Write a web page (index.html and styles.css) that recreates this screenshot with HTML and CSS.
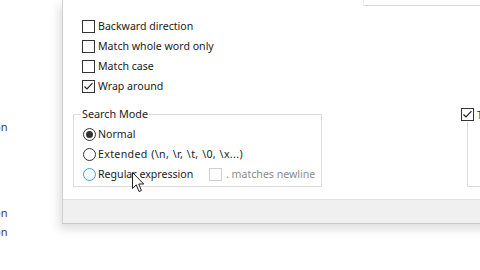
FILE: index.html
```html
<!DOCTYPE html>
<html>
<head>
<meta charset="utf-8">
<link rel="stylesheet" href="styles.css">
</head>
<body>
<div class="page">
  <div class="margin-col">
    <span class="frag f1">on</span>
    <span class="frag f2">on</span>
    <span class="frag f3">on</span>
  </div>
  <div class="dialog">
    <div class="content">
      <div class="combo"></div>
      <div class="options">
        <div class="row"><span class="cb"></span><span class="lbl">Backward direction</span></div>
        <div class="row"><span class="cb"></span><span class="lbl">Match whole word only</span></div>
        <div class="row"><span class="cb"></span><span class="lbl">Match case</span></div>
        <div class="row"><span class="cb"><svg width="11" height="11" viewBox="0 0 11 11"><path d="M1.5 5.5 L4 8 L9.5 2.2" fill="none" stroke="#222" stroke-width="1.2"/></svg></span><span class="lbl">Wrap around</span></div>
      </div>
      <div class="groups">
        <fieldset class="mode">
          <legend>Search Mode</legend>
          <div class="radios">
            <div class="row"><span class="rb on"><span class="dot"></span></span><span class="lbl">Normal</span></div>
            <div class="row"><span class="rb"></span><span class="lbl ext">Extended (\n, \r, \t, \0, \x...)</span></div>
            <div class="row"><span class="rb hover"></span><span class="lbl re">Regular expression</span><span class="cb dis"></span><span class="lbl dim">. matches newline</span></div>
          </div>
        </fieldset>
        <div class="trans">
          <div class="row"><span class="cb"><svg width="11" height="11" viewBox="0 0 11 11"><path d="M1.5 5.5 L4 8 L9.5 2.2" fill="none" stroke="#222" stroke-width="1.2"/></svg></span><span class="lbl">Transparency</span></div>
          <div class="tbox"></div>
        </div>
      </div>
    </div>
    <div class="status"></div>
  </div>
</div>
<svg class="cursor" width="14" height="22" viewBox="0 0 14 22"><path d="M0.5 0.5 L0.5 16.5 L4.3 12.8 L7 19.5 L9.4 18.5 L6.7 12 L11.8 12 Z" fill="#fff" stroke="#222" stroke-width="1"/></svg>
</body>
</html>
```

FILE: styles.css
```css
html, body {
  margin: 0;
  padding: 0;
  background: #fff;
}
body {
  width: 480px;
  height: 270px;
  overflow: hidden;
  position: relative;
  font-family: "Noto Sans", "Open Sans", sans-serif;
  font-size: 10.6px;
  color: #1b1b1b;
}
.page {
  display: flex;
  height: 270px;
  overflow: hidden;
}
.margin-col {
  width: 62px;
  flex: none;
  display: flex;
  flex-direction: column;
  overflow: hidden;
  opacity: 0.99;
}
.frag {
  display: block;
  margin-left: -6px;
  line-height: 14px;
  color: #3a3a3a;
  font-size: 11px;
}
.f1 { margin-top: 120px; }
.f2 { margin-top: 72px; }
.f3 { margin-top: 5px; }
.dialog {
  width: 430px;
  flex: none;
  height: 224px;
  border-left: 1px solid #cfcfcf;
  background: #fff;
  display: flex;
  flex-direction: column;
  box-shadow: -3px 5px 9px rgba(0, 0, 0, 0.13);
}
.content {
  flex: 1;
  display: flex;
  flex-direction: column;
}
.combo {
  height: 5px;
  margin-left: 300px;
  border-bottom: 1px solid #dcdcdc;
  border-left: 1px solid #ececec;
}
.options {
  margin-top: 10px;
  padding-left: 19px;
}
.row {
  height: 20px;
  display: flex;
  align-items: center;
  white-space: nowrap;
}
.cb {
  width: 13px;
  height: 13px;
  box-sizing: border-box;
  border: 1px solid #333;
  background: #fff;
  flex: none;
  display: flex;
  align-items: center;
  justify-content: center;
}
.cb + .lbl { margin-left: 3px; }
.groups {
  margin-top: 10px;
  display: flex;
  align-items: flex-start;
}
.mode {
  flex: none;
  margin: 0 0 0 10px;
  width: 249px;
  box-sizing: border-box;
  border: 1px solid #dcdcdc;
  padding: 0 0 2px 9px;
}
.mode legend {
  padding: 0 1px;
  margin-left: -2px;
  line-height: 16px;
  font-size: 10.8px;
}
.radios { margin-top: 2px; }
.rb {
  width: 13px;
  height: 13px;
  box-sizing: border-box;
  border: 1px solid #333;
  border-radius: 50%;
  background: #fff;
  flex: none;
  display: flex;
  align-items: center;
  justify-content: center;
}
.rb.hover {
  border-color: #4a9fd8;
  background: #f4f9fd;
}
.dot {
  width: 7px;
  height: 7px;
  border-radius: 50%;
  background: #333;
}
.rb + .lbl { margin-left: 2px; }
.lbl.ext { letter-spacing: 0.35px; word-spacing: 0.5px; }
.lbl.re { width: 111px; }
.cb.dis {
  border-color: #cfcfcf;
}
.cb.dis + .lbl { margin-left: 4px; }
.dim { color: #8c8c8c; }
.trans {
  flex: none;
  margin-left: 139px;
  margin-top: 1px;
  width: 60px;
  overflow: hidden;
}
.trans .row { height: 15px; }
.tbox {
  margin-left: 6px;
  height: 64px;
  border-left: 1px solid #dcdcdc;
  border-bottom: 1px solid #dcdcdc;
}
.status {
  height: 23px;
  background: #f0f0f0;
  border-top: 1px solid #e2e2e2;
  border-bottom: 1px solid #c9c9c9;
}
.cursor {
  position: absolute;
  left: 132px;
  top: 172px;
}
```
